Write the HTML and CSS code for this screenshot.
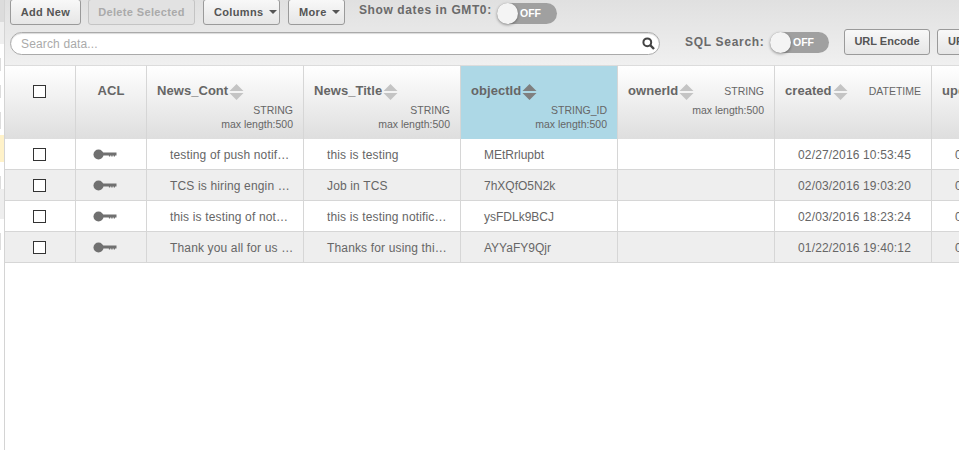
FILE: index.html
```html
<!DOCTYPE html>
<html lang="en">
<head>
<meta charset="utf-8">
<title>Data browser</title>
<link rel="stylesheet" href="styles.css">
</head>
<body>
<div class="page">
  <aside class="strip">
    <div class="s s1"></div><div class="s s2"></div>
    <div class="s s3"><i></i></div><div class="s s3"><i></i></div><div class="s s3"><i></i></div>
    <div class="s s4"></div>
    <div class="s s3"><i></i></div>
    <div class="s s5"></div>
    <div class="s s3"><i></i></div>
  </aside>
  <main class="main">
    <div class="toolbar">
      <div class="row row1">
        <button class="btn b-add">Add New</button>
        <button class="btn b-del">Delete Selected</button>
        <button class="btn b-col">Columns<span class="caret"></span></button>
        <button class="btn b-more">More<span class="caret"></span></button>
        <span class="lbl lbl-gmt">Show dates in GMT0:</span>
        <span class="toggle"><span class="knob"></span><span class="off">OFF</span></span>
      </div>
      <div class="row row2">
        <div class="search">
          <span class="ph">Search data...</span>
          <svg class="mag" width="13" height="13" viewBox="0 0 13 13"><circle cx="5.3" cy="5.3" r="3.9" fill="none" stroke="#444" stroke-width="2"/><path d="M8.2 8.2L12 12" stroke="#444" stroke-width="2.4"/></svg>
        </div>
        <span class="lbl lbl-sql">SQL Search:</span>
        <span class="toggle t-sql"><span class="knob"></span><span class="off">OFF</span></span>
        <button class="btn b-enc">URL Encode</button>
        <button class="btn b-url">URL Decode</button>
      </div>
    </div>
    <div class="grid">
      <div class="hcell c-chk"><span class="cb"></span></div>
      <div class="hcell c-acl"><span class="hname">ACL</span></div>
      <div class="hcell c-col"><div class="htop"><span class="hname">News_Cont</span><svg class="sort" width="15" height="16" viewBox="0 0 15 16"><use href="#s"/></svg></div><div class="meta">STRING<br>max length:500</div></div>
      <div class="hcell c-col"><div class="htop"><span class="hname">News_Title</span><svg class="sort" width="15" height="16" viewBox="0 0 15 16"><use href="#s"/></svg></div><div class="meta">STRING<br>max length:500</div></div>
      <div class="hcell c-col active"><div class="htop"><span class="hname">objectId</span><svg class="sort" width="15" height="16" viewBox="0 0 15 16"><use href="#s"/></svg></div><div class="meta">STRING_ID<br>max length:500</div></div>
      <div class="hcell c-col"><div class="htop top-inline"><span class="hname">ownerId</span><svg class="sort" width="15" height="16" viewBox="0 0 15 16"><use href="#s"/></svg><span class="meta m-inline">STRING</span></div><div class="meta m-line">max length:500</div></div>
      <div class="hcell c-col"><div class="htop top-inline"><span class="hname">created</span><svg class="sort" width="15" height="16" viewBox="0 0 15 16"><use href="#s"/></svg><span class="meta m-inline">DATETIME</span></div></div>
      <div class="hcell c-last"><div class="htop"><span class="hname">updated</span></div></div>

      <div class="cell"><span class="cb"></span></div>
      <div class="cell"><svg class="key" width="24" height="11" viewBox="0 0 24 11"><use href="#k"/></svg></div>
      <div class="cell txt">testing of push notif…</div>
      <div class="cell txt">this is testing</div>
      <div class="cell txt t2">MEtRrlupbt</div>
      <div class="cell"></div>
      <div class="cell date">02/27/2016 10:53:45</div>
      <div class="cell last">02/27/2016 10:53:45</div>

      <div class="cell alt"><span class="cb"></span></div>
      <div class="cell alt"><svg class="key" width="24" height="11" viewBox="0 0 24 11"><use href="#k"/></svg></div>
      <div class="cell alt txt">TCS is hiring engin …</div>
      <div class="cell alt txt">Job in TCS</div>
      <div class="cell alt txt t2">7hXQfO5N2k</div>
      <div class="cell alt"></div>
      <div class="cell alt date">02/03/2016 19:03:20</div>
      <div class="cell alt last">02/03/2016 19:03:20</div>

      <div class="cell"><span class="cb"></span></div>
      <div class="cell"><svg class="key" width="24" height="11" viewBox="0 0 24 11"><use href="#k"/></svg></div>
      <div class="cell txt">this is testing of not…</div>
      <div class="cell txt">this is testing notific…</div>
      <div class="cell txt t2">ysFDLk9BCJ</div>
      <div class="cell"></div>
      <div class="cell date">02/03/2016 18:23:24</div>
      <div class="cell last">02/03/2016 18:23:24</div>

      <div class="cell alt"><span class="cb"></span></div>
      <div class="cell alt"><svg class="key" width="24" height="11" viewBox="0 0 24 11"><use href="#k"/></svg></div>
      <div class="cell alt txt">Thank you all for us …</div>
      <div class="cell alt txt">Thanks for using thi…</div>
      <div class="cell alt txt t2">AYYaFY9Qjr</div>
      <div class="cell alt"></div>
      <div class="cell alt date">01/22/2016 19:40:12</div>
      <div class="cell alt last">01/22/2016 19:40:12</div>
    </div>
  </main>
</div>
<svg class="defs" width="0" height="0"><defs>
  <g id="k" fill="#707070"><circle cx="5.5" cy="5.5" r="5"/><path d="M9 3.4H23.5V6.4H22V7.6H20.7V6.4H19.6V7.6H18.3V6.4H17.2V7.6H15.9V6.4H9Z"/></g>
  <path id="s" d="M7.5 0L14.5 7H.5ZM.5 9H14.5L7.5 16Z"/>
</defs></svg>
</body>
</html>
```
FILE: styles.css
```css
* { box-sizing: border-box; }
html, body { margin: 0; height: 100%; background: #fff; overflow: hidden; }
body { font-family: "Liberation Sans", Arial, sans-serif; color: #666; }
.defs { position: absolute; }
.page { display: flex; width: 959px; height: 450px; overflow: hidden; }
.strip { width: 5px; flex: none; border-right: 1px solid #d4d4d4; display: flex; flex-direction: column; height: 450px; }
.s { width: 100%; }
.s1 { height: 22px; background: #dcdcdc; }
.s2 { height: 22px; background: #efefef; }
.s3 { height: 27px; background: #fff; padding: 14px 0 0 0; }
.s3 i { display: block; width: 1px; height: 17px; background: #ddd; }
.s4 { height: 27px; background: #fff2c9; margin-top: 10px; }
.s5 { height: 30px; background: #eee; }
.main { width: 954px; flex: none; overflow: hidden; }
.toolbar { height: 65px; background: linear-gradient(#e0e0e0, #f0f0f0); overflow: hidden; }
.row { display: flex; align-items: center; }
.row1 { height: 26px; margin-top: -1px; padding-left: 5px; }
.row2 { height: 26px; margin-top: 4px; padding-left: 5px; }
.btn { font: bold 11px/12px "Liberation Sans", Arial, sans-serif; letter-spacing: .35px; color: #555; height: 26px; padding: 0 0 2px; border: 1px solid #9a9a9a; border-radius: 3px; background: linear-gradient(#f8f8f8, #e6e6e6); white-space: nowrap; flex: none; }
.row1 .btn { padding-bottom: 0; }
.b-add { width: 71px; }
.b-del { width: 107px; margin-left: 7px; color: #aaa; border-color: #c4c4c4; background: #e2e2e2; }
.b-col, .b-more { text-align: left; padding-left: 10px; }
.b-col { width: 77px; margin-left: 8px; }
.b-more { width: 57px; margin-left: 8px; }
.caret { display: inline-block; width: 0; height: 0; margin-left: 5px; vertical-align: 2px; border: 4px solid transparent; border-top: 4px solid #555; border-bottom: 0; }
.lbl { font-weight: bold; font-size: 12px; letter-spacing: .6px; color: #6a6a6a; white-space: nowrap; }
.lbl-gmt { margin-left: 14px; width: 138px; position: relative; top: -2px; flex: none; }
.toggle { width: 60px; height: 21px; flex: none; border-radius: 11px; background: #a0a0a0; position: relative; display: block; }
.row1 .toggle { top: 1px; }
.t-sql { width: 59px; }
.knob { position: absolute; left: 0; top: 0; width: 21px; height: 21px; border-radius: 50%; background: #f4f4f4; box-shadow: 0 1px 3px rgba(0,0,0,.4); }
.off { position: absolute; left: 23px; top: 4px; font-size: 10.5px; font-weight: bold; color: #fff; line-height: 13px; }
.search { width: 650px; height: 23px; margin-top: 3px; flex: none; display: flex; align-items: center; justify-content: space-between; padding: 0 4px 0 10px; background: #fff; border: 1px solid #aaa; border-radius: 12px; box-shadow: inset 0 1px 1px rgba(0,0,0,.15); }
.ph { font-size: 12px; color: #aaa; letter-spacing: .15px; }
.mag { display: block; }
.lbl-sql { margin-left: 25px; width: 85px; flex: none; letter-spacing: .7px; }
.b-enc { width: 86px; margin-left: 15px; letter-spacing: 0; }
.b-url { width: 86px; margin-left: 7px; text-align: left; padding-left: 10px; letter-spacing: 0; }
.grid { display: grid; width: 1040px; grid-template-columns: 71px 71px 157px 157px 157px 157px 157px 113px; grid-template-rows: 74px 31px 31px 31px 31px; }
.hcell { background: linear-gradient(#fff, #dedede); border-right: 1px solid #d6d6d6; border-top: 1px solid #dcdcdc; padding: 17px 10px 0; position: relative; }
.c-chk { padding: 19px 0 0; text-align: center; }
.c-acl { text-align: center; padding: 15px 0 0; }
.c-chk .cb { margin-right: 2px; }
.active { background: #add8e6; }
.htop { display: flex; align-items: center; height: 16px; }
.hname { font-weight: bold; font-size: 13px; line-height: 16px; letter-spacing: .05px; color: #666; }
.sort { display: block; margin: 2px 0 0 1px; fill: #c4c4c4; flex: none; }
.active .sort { fill: #7f7f7f; }
.meta { font-size: 10.5px; line-height: 14px; color: #666; text-align: right; margin-top: 4px; white-space: nowrap; }
.top-inline .m-inline { margin: 0 0 0 auto; }
.m-line { margin-top: 4px; }
.cb { display: inline-block; width: 13px; height: 13px; border: 1px solid #333; background: #fff; vertical-align: top; }
.cell { height: 31px; background: #fff; border-right: 1px solid #d6d6d6; border-bottom: 1px solid #d6d6d6; text-align: center; font-size: 12px; line-height: 32px; letter-spacing: .15px; white-space: nowrap; overflow: hidden; color: #666; }
.cell .cb { margin-top: 9px; margin-right: 2px; }
.cell.alt { background: #eee; }
.key { margin-top: 10px; margin-right: 12px; vertical-align: top; }
.txt { text-align: left; padding-left: 23px; }
.t2 { letter-spacing: 0; }
.date { text-align: left; padding-left: 23px; }
.last { text-align: left; padding-left: 23px; }
```
